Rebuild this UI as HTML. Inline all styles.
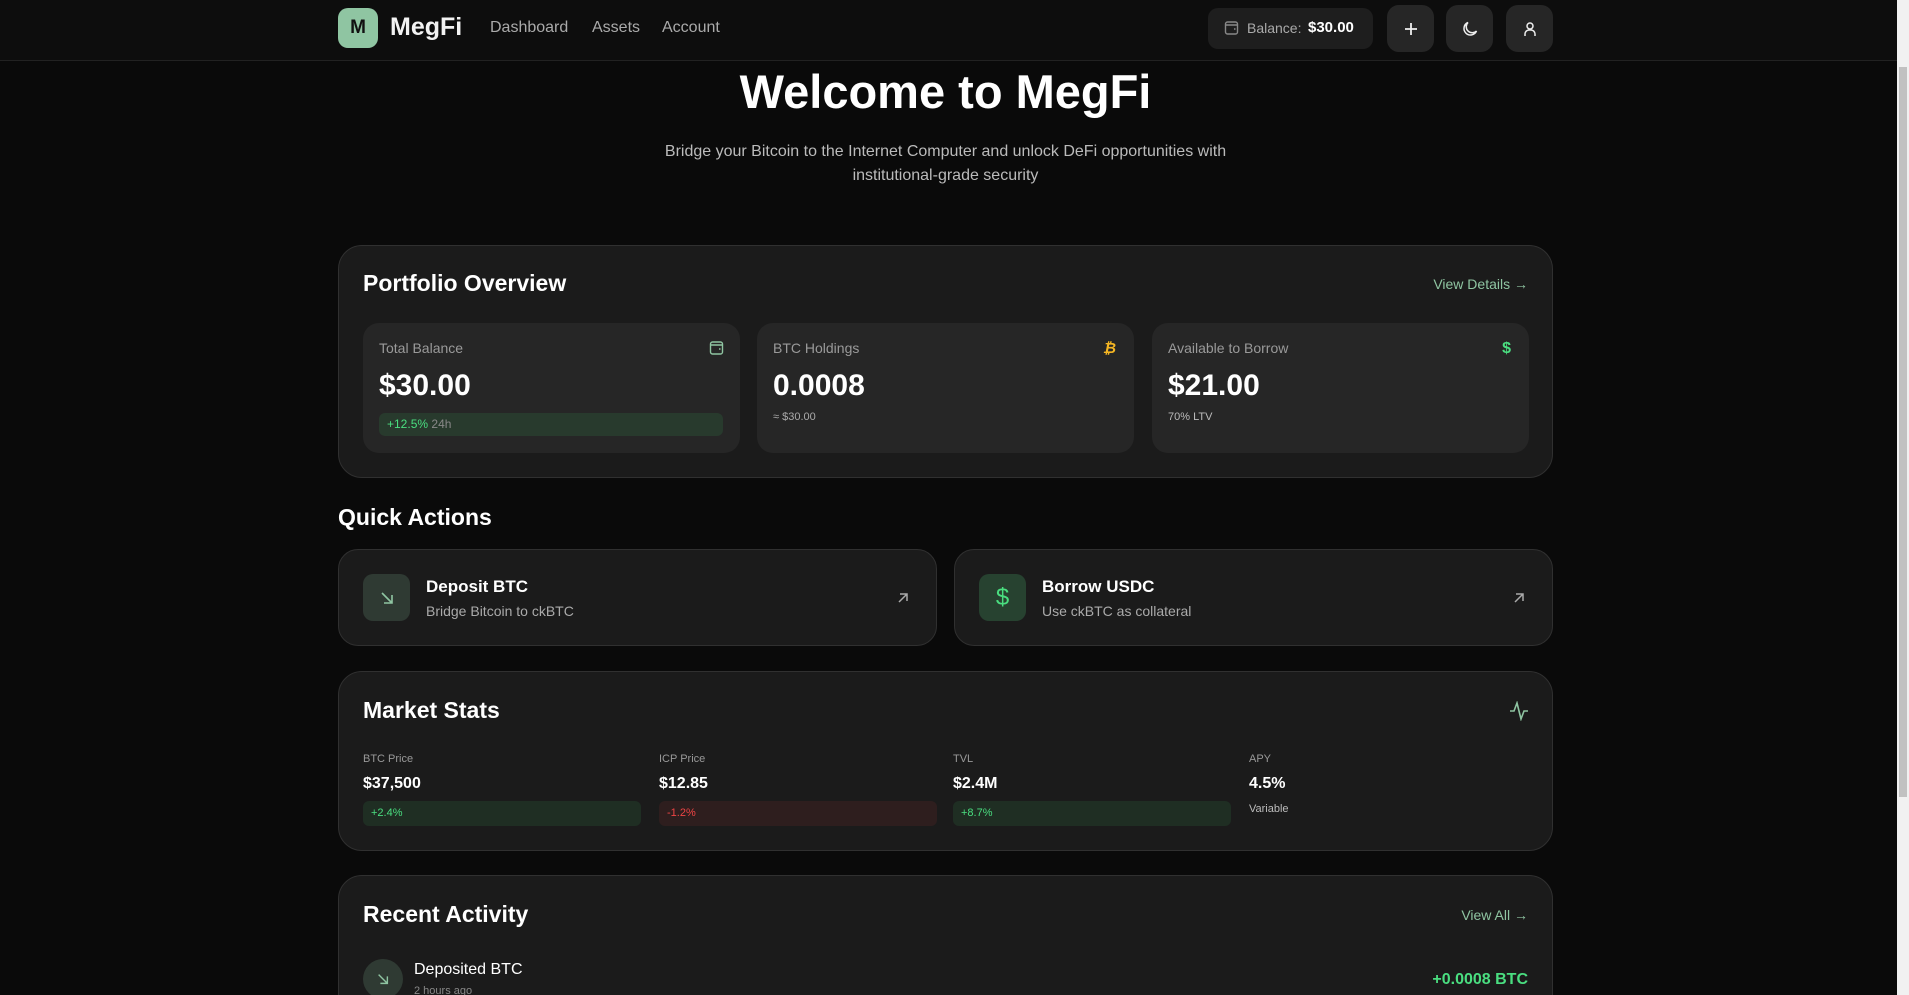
<!DOCTYPE html>
<html style="overflow:hidden;height:995px"><head><meta charset="utf-8"><style>
*{box-sizing:border-box;margin:0;padding:0}
html,body{overflow:hidden}
body{width:1909px;height:995px;overflow:hidden;background:#0a0a0a;font-family:"Liberation Sans",sans-serif;color:#fff;position:relative}
.abs{position:absolute}
.hdr{left:0;top:0;width:1897px;height:61px;background:#0d0d0d;border-bottom:1px solid #222}
.card{position:absolute;background:#1b1b1b;border:1px solid #303030;border-radius:24px}
.inner{position:absolute;background:#262626;border-radius:16px;top:77px;width:377px;height:130px}
.lbl{position:absolute;font-size:14px;color:#9a9a9a}
.btn{position:absolute;top:5px;width:47px;height:47px;background:#262626;border-radius:12px;display:flex;align-items:center;justify-content:center}
.t{position:absolute;white-space:nowrap}
</style></head><body>
<div class="abs hdr"></div>
<div class="abs" style="left:338px;top:8px;width:40px;height:40px;background:#8fc5a2;border-radius:10px;color:#111;font-size:19px;font-weight:bold;display:flex;align-items:center;justify-content:center">M</div>
<div class="t" style="left:390px;top:13px;font-size:25px;font-weight:bold;color:#f2f2f2">MegFi</div>
<div class="t" style="left:490px;top:19px;font-size:16px;color:#aaa">Dashboard</div>
<div class="t" style="left:592px;top:19px;font-size:16px;color:#aaa">Assets</div>
<div class="t" style="left:662px;top:19px;font-size:16px;color:#aaa">Account</div>
<div class="abs" style="left:1208px;top:8px;width:165px;height:41px;background:#1e1e1e;border-radius:10px"></div>
<svg class="abs" style="left:1224px;top:20px" width="15" height="16" viewBox="0 0 15 16" fill="none" stroke="#888" stroke-width="1.4"><rect x="1.5" y="2" width="12" height="12" rx="2"/><path d="M1.5 5h12M10 9h1.5"/></svg>
<div class="t" style="left:1247px;top:20px;font-size:14px;color:#aaa">Balance:</div>
<div class="t" style="left:1308px;top:19px;font-size:15px;font-weight:bold;color:#fff">$30.00</div>
<div class="btn" style="left:1387px"><svg width="18" height="18" viewBox="0 0 18 18" stroke="#eee" stroke-width="1.8"><path d="M9 3v12M3 9h12"/></svg></div>
<div class="btn" style="left:1446px"><svg width="18" height="18" viewBox="0 0 18 18" fill="none" stroke="#eee" stroke-width="1.5"><path d="M7 2.5A6.5 6.5 0 1 0 15.5 11 5 5 0 0 1 7 2.5z"/></svg></div>
<div class="btn" style="left:1506px"><svg width="18" height="18" viewBox="0 0 18 18" fill="none" stroke="#eee" stroke-width="1.5"><circle cx="9" cy="6" r="3"/><path d="M4 16v-2a4 4 0 0 1 4-4h2a4 4 0 0 1 4 4v2"/></svg></div>
<div class="abs" style="left:1897px;top:0;width:12px;height:995px;background:#f1f1f1"></div>
<div class="abs" style="left:1899px;top:67px;width:8px;height:730px;background:#c1c1c1"></div>

<div class="t" style="left:0;width:1891px;text-align:center;top:64px;font-size:47px;font-weight:bold;color:#fff">Welcome to MegFi</div>
<div class="t" style="left:0;width:1891px;text-align:center;top:140px;font-size:16px;line-height:24px;color:#bbb;white-space:normal">Bridge your Bitcoin to the Internet Computer and unlock DeFi opportunities with<br>institutional-grade security</div>

<div class="card" style="left:338px;top:245px;width:1215px;height:233px">
 <div class="t" style="left:24px;top:24px;font-size:23px;font-weight:bold">Portfolio Overview</div>
 <div class="t" style="right:24px;top:30px;font-size:14px;color:#8fc5a2">View Details →</div>
 <div class="inner" style="left:24px">
  <div class="lbl" style="left:16px;top:17px">Total Balance</div>
  <svg class="abs" style="right:16px;top:17px" width="15" height="16" viewBox="0 0 15 16" fill="none" stroke="#8fc5a2" stroke-width="1.4"><rect x="1.5" y="2" width="12" height="12" rx="2"/><path d="M1.5 5h12M10 9h1.5"/></svg>
  <div class="t" style="left:16px;top:46px;font-size:30px;font-weight:bold">$30.00</div>
  <div class="abs" style="left:16px;top:90px;width:344px;height:23px;background:#283a2d;border-radius:6px;font-size:12px;line-height:23px;padding-left:8px"><span style="color:#4ade80">+12.5%</span> <span style="color:#888">24h</span></div>
 </div>
 <div class="inner" style="left:418px">
  <div class="lbl" style="left:16px;top:17px">BTC Holdings</div>
  <div class="t" style="right:18px;top:17px;font-size:15px;font-weight:bold;color:#f5b623;font-style:italic">₿</div>
  <div class="t" style="left:16px;top:46px;font-size:30px;font-weight:bold">0.0008</div>
  <div class="t" style="left:16px;top:88px;font-size:11px;color:#aaa">≈ $30.00</div>
 </div>
 <div class="inner" style="left:813px">
  <div class="lbl" style="left:16px;top:17px">Available to Borrow</div>
  <div class="t" style="right:18px;top:17px;font-size:16px;font-weight:bold;color:#4ade80">$</div>
  <div class="t" style="left:16px;top:46px;font-size:30px;font-weight:bold">$21.00</div>
  <div class="t" style="left:16px;top:88px;font-size:11px;color:#bbb">70% LTV</div>
 </div>
</div>

<div class="t" style="left:338px;top:504px;font-size:23px;font-weight:bold">Quick Actions</div>
<div class="card" style="left:338px;top:549px;width:599px;height:97px;border-radius:20px">
 <div class="abs" style="left:24px;top:24px;width:47px;height:47px;background:#2f3a33;border-radius:10px;display:flex;align-items:center;justify-content:center"><svg width="16" height="16" viewBox="0 0 16 16" fill="none" stroke="#8fc5a2" stroke-width="1.6"><path d="M3 3l10 10M13 5v8H5"/></svg></div>
 <div class="t" style="left:87px;top:27px;font-size:17px;font-weight:bold">Deposit BTC</div>
 <div class="t" style="left:87px;top:53px;font-size:14px;color:#aaa">Bridge Bitcoin to ckBTC</div>
 <svg class="abs" style="left:557px;top:41px" width="14" height="14" viewBox="0 0 14 14" fill="none" stroke="#aaa" stroke-width="1.5"><path d="M3 11l8-8M4 3h7v7"/></svg>
</div>
<div class="card" style="left:954px;top:549px;width:599px;height:97px;border-radius:20px">
 <div class="abs" style="left:24px;top:24px;width:47px;height:47px;background:#274230;border-radius:10px;display:flex;align-items:center;justify-content:center;color:#4ade80;font-size:24px">$</div>
 <div class="t" style="left:87px;top:27px;font-size:17px;font-weight:bold">Borrow USDC</div>
 <div class="t" style="left:87px;top:53px;font-size:14px;color:#aaa">Use ckBTC as collateral</div>
 <svg class="abs" style="left:557px;top:41px" width="14" height="14" viewBox="0 0 14 14" fill="none" stroke="#aaa" stroke-width="1.5"><path d="M3 11l8-8M4 3h7v7"/></svg>
</div>

<div class="card" style="left:338px;top:671px;width:1215px;height:180px">
 <div class="t" style="left:24px;top:25px;font-size:23px;font-weight:bold">Market Stats</div>
 <svg class="abs" style="left:1170px;top:29px" width="20" height="20" viewBox="0 0 20 20" fill="none" stroke="#8fc5a2" stroke-width="1.6"><path d="M1 10h4l3-8 4 16 3-8h4"/></svg>
 <div class="t" style="left:24px;top:81px;font-size:11px;color:#999">BTC Price</div>
 <div class="t" style="left:24px;top:103px;font-size:16px;font-weight:bold">$37,500</div>
 <div class="abs" style="left:24px;top:129px;width:278px;height:25px;background:#1f2e23;border-radius:6px;font-size:11px;line-height:25px;padding-left:8px;color:#4ade80">+2.4%</div>
 <div class="t" style="left:320px;top:81px;font-size:11px;color:#999">ICP Price</div>
 <div class="t" style="left:320px;top:103px;font-size:16px;font-weight:bold">$12.85</div>
 <div class="abs" style="left:320px;top:129px;width:278px;height:25px;background:#2e1e1e;border-radius:6px;font-size:11px;line-height:25px;padding-left:8px;color:#ef4444">-1.2%</div>
 <div class="t" style="left:614px;top:81px;font-size:11px;color:#999">TVL</div>
 <div class="t" style="left:614px;top:103px;font-size:16px;font-weight:bold">$2.4M</div>
 <div class="abs" style="left:614px;top:129px;width:278px;height:25px;background:#1f2e23;border-radius:6px;font-size:11px;line-height:25px;padding-left:8px;color:#4ade80">+8.7%</div>
 <div class="t" style="left:910px;top:81px;font-size:11px;color:#999">APY</div>
 <div class="t" style="left:910px;top:103px;font-size:16px;font-weight:bold">4.5%</div>
 <div class="t" style="left:910px;top:131px;font-size:11px;color:#bbb">Variable</div>
</div>

<div class="card" style="left:338px;top:875px;width:1215px;height:160px">
 <div class="t" style="left:24px;top:25px;font-size:23px;font-weight:bold">Recent Activity</div>
 <div class="t" style="right:24px;top:31px;font-size:14px;color:#8fc5a2">View All →</div>
 <div class="abs" style="left:24px;top:83px;width:40px;height:40px;background:#2f3a33;border-radius:50%;display:flex;align-items:center;justify-content:center"><svg width="14" height="14" viewBox="0 0 16 16" fill="none" stroke="#8fc5a2" stroke-width="1.6"><path d="M3 3l10 10M13 5v8H5"/></svg></div>
 <div class="t" style="left:75px;top:85px;font-size:16px">Deposited BTC</div>
 <div class="t" style="left:75px;top:109px;font-size:11px;color:#888">2 hours ago</div>
 <div class="t" style="right:24px;top:95px;font-size:16px;font-weight:bold;color:#4ade80">+0.0008 BTC</div>
</div>
</body></html>
